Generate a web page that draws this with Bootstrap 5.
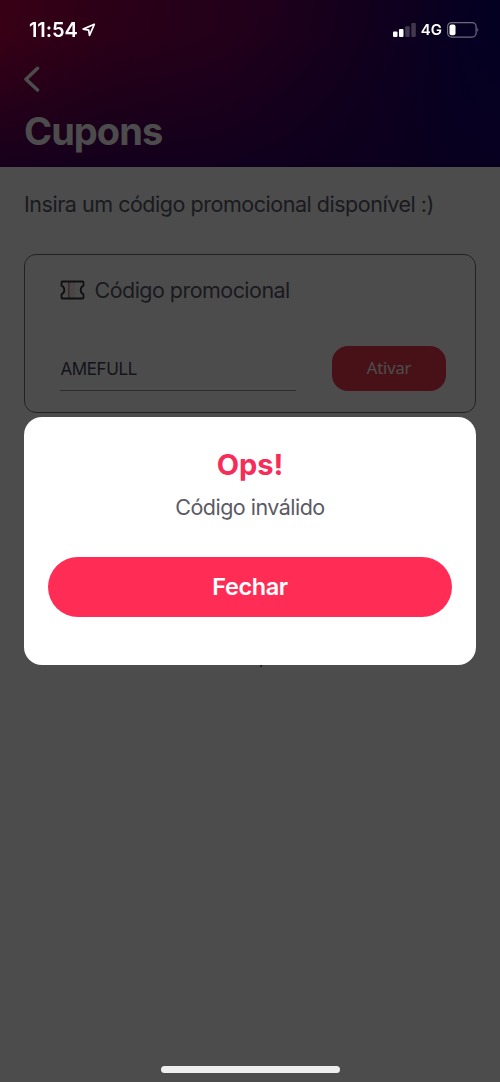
<!DOCTYPE html>
<html lang="pt-BR">
<head>
<meta charset="utf-8">
<meta name="viewport" content="width=device-width, initial-scale=1">
<title>Cupons</title>
<link href="https://cdn.jsdelivr.net/npm/bootstrap@5.3.0/dist/css/bootstrap.min.css" rel="stylesheet">
<style>
  body { font-family: Inter, "Liberation Sans", sans-serif; background: #fff; color: #5a5968; height: 1082px; overflow: hidden; }
  .app-header { height: 166.500px; padding: 66px 24px 0; color: #fff;
    background: linear-gradient(180deg, rgba(36,0,100,0) 20%, rgba(36,0,100,.7) 100%), linear-gradient(100deg, #bc0048 0%, #8c004e 22%, #740058 45%, #40005e 68%, #120070 90%, #0c0078 100%); }
  .app-title { font-size: 38px; line-height: 46px; letter-spacing: -.95px; margin: 16px 0 0; }
  .intro { font-size: 21.5px; line-height: 28px; letter-spacing: -.47px; margin: 0; padding: 23px 24px 0; white-space: nowrap; }
  .coupon { height: 159px; margin: 36px 24px 0; border: 1.5px solid #74737c; border-radius: 12px; padding: 21px 29px 0 35px; }
  .coupon-label { font-size: 21.5px; line-height: 28px; letter-spacing: -.54px; margin-left: 9.500px; white-space: nowrap; }
  .code-row { margin-top: 42.500px; }
  .code-input { width: 236px; height: 44.500px; border-bottom: 1px solid #95949c; color: #46455a; font-size: 17px; letter-spacing: -.4px; padding-left: .5px; }
  .btn-apply { width: 114px; height: 45px; border-radius: 16px; background: #f2364f; color: #fff; font-family: "Noto Sans", sans-serif; font-size: 16.500px; letter-spacing: -.1px; padding: 0; }
  .dim { background: rgba(0,0,0,.7); }
  .alert-box { margin: 417px 24px 0; height: 248px; border-radius: 18px; padding: 31px 24px 0; }
  .alert-title { color: #f62d58; font-size: 29px; line-height: 34px; margin: 0; }
  .alert-text { color: #5b5a65; font-size: 21.5px; line-height: 28px; letter-spacing: -.52px; margin: 11px 0 0; }
  .btn-dismiss { height: 60px; margin-top: 36px; background: #ff2d55; color: #fff; font-size: 23.500px; font-weight: 600; letter-spacing: -.4px; }
  .btn-dismiss:hover { background: #ff2d55; color: #fff; }
  .status { height: 60px; padding: 0 21px 0 29px; color: #fff; }
  .clock { font-size: 20px; font-weight: 600; letter-spacing: -.1px; }
  .arrow { margin-left: 4px; }
  .net { font-size: 15px; font-weight: 600; margin: 0 5px 0 5px; }
  .home-bar { width: 179px; height: 7px; margin-bottom: 9px; background: #eee; }
  .tail { left: 260px; top: 665px; width: 2px; height: 2px; background: #222226; }
</style>
</head>
<body>
<header class="app-header">
  <svg class="d-block" width="18" height="26" viewBox="0 0 18 26" fill="none" stroke="#fff" stroke-width="3.500" stroke-linecap="round" stroke-linejoin="round"><path d="M13.500 2.300 2 13.200l11.500 10.800"/></svg>
  <h1 class="app-title fw-bold">Cupons</h1>
</header>
<main>
  <p class="intro">Insira um código promocional disponível :)</p>
  <section class="coupon">
    <div class="d-flex align-items-center">
      <svg width="25" height="20" viewBox="0 0 25 20" fill="none" stroke="#35343f" stroke-width="1.800" stroke-linejoin="round"><path d="M9 2h6v16H9Z" fill="#e6a6ae" fill-opacity=".25" stroke="none"/><path d="M8.800 2v16" stroke="#c88590" stroke-width="1.500"/><path d="M2.500 1.500h20q1 0 1 1v3.200c-2 .8-2.800 2.300-2.800 4.300s.8 3.500 2.800 4.300v3.200q0 1-1 1h-20q-1 0-1-1v-3.200c2-.8 2.800-2.300 2.800-4.300S3.500 6.500 1.500 5.700V2.500q0-1 1-1Z"/></svg>
      <span class="coupon-label">Código promocional</span>
    </div>
    <div class="code-row d-flex justify-content-between align-items-start">
      <div class="code-input d-flex align-items-center"><span class="pt-1">AMEFULL</span></div>
      <button class="btn btn-apply" type="button">Ativar</button>
    </div>
  </section>
</main>
<div class="dim position-fixed top-0 start-0 w-100 h-100">
  <section class="alert-box bg-white text-center" role="alertdialog">
    <h2 class="alert-title fw-bold">Ops!</h2>
    <p class="alert-text">Código inválido</p>
    <button class="btn btn-dismiss w-100 rounded-pill border-0" type="button">Fechar</button>
  </section>
  <i class="tail position-absolute"></i>
</div>
<div class="status position-fixed top-0 start-0 w-100 d-flex align-items-center justify-content-between">
  <div class="d-flex align-items-center">
    <span class="clock">11:54</span>
    <svg class="arrow" width="14" height="14" viewBox="0 0 14 14" fill="none" stroke="#fff" stroke-width="1.700" stroke-linejoin="round"><path d="M12.300 1.300 1.200 6.100l5.500 1 .8 5.300Z"/></svg>
  </div>
  <div class="d-flex align-items-center">
    <svg width="23" height="14" viewBox="0 0 23 14" fill="#fff"><rect y="8.500" width="4.500" height="5.500" rx="1"/><rect x="6" y="6" width="4.500" height="8" rx="1"/><g opacity=".22"><rect x="12.200" y="3.200" width="4.500" height="10.800" rx="1"/><rect x="18.300" width="4.500" height="14" rx="1"/></g></svg>
    <span class="net">4G</span>
    <svg width="32" height="16" viewBox="0 0 32 16"><rect x=".6" y=".6" width="28.500" height="14.500" rx="4" fill="none" stroke="#fff" stroke-opacity=".42" stroke-width="1.200"/><rect x="2.500" y="2.500" width="6" height="10.700" rx="2" fill="#fff"/><path d="M30.500 5.500q1.500 2.300 0 4.600Z" fill="#fff" opacity=".6"/></svg>
  </div>
</div>
<div class="position-fixed bottom-0 start-0 w-100 d-flex justify-content-center"><div class="home-bar rounded-pill"></div></div>
<script src="https://cdn.jsdelivr.net/npm/bootstrap@5.3.0/dist/js/bootstrap.bundle.min.js"></script>
</body>
</html>
